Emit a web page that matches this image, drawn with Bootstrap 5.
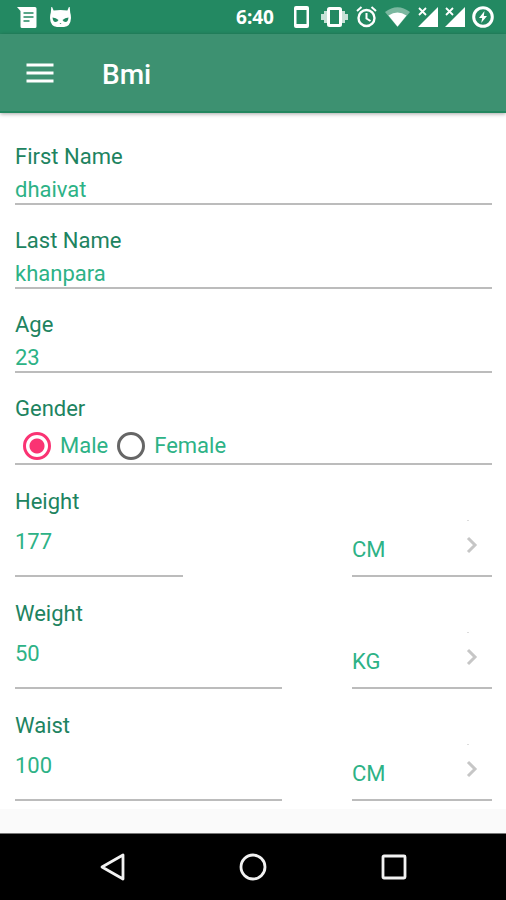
<!DOCTYPE html>
<html lang="en">
<head>
<meta charset="utf-8">
<meta name="viewport" content="width=device-width, initial-scale=1">
<title>Bmi</title>
<link href="https://cdn.jsdelivr.net/npm/bootstrap@5.3.0/dist/css/bootstrap.min.css" rel="stylesheet">
<style>
  body { font-family: Roboto, "Liberation Sans", sans-serif; font-size: 22px; line-height: 32px; color: #208360; background: #fafafa; }
  svg { display: block; flex: none; }
  .status-bar { height: 34px; padding: 0 12px 0 17px; gap: 13px; background: #238962; color: #fff; }
  .status-icons { gap: 8px; }
  .signals { gap: 7px; }
  .clock { font-family: "Noto Sans", Roboto, sans-serif; font-size: 19px; font-weight: 700; margin-right: 12px; }
  .app-bar { height: 79px; padding: 0 26px; gap: 48px; background: #3d9171; border-bottom: 2px solid #23875f; box-shadow: 0 1px 4px rgba(0,0,0,.35); color: #fff; position: relative; }
  .app-title { font-size: 28px; font-weight: 500; line-height: 34px; padding-top: 4px; }
  .bmi-form { padding: 27px 14px 8px 15px; }
  .field { margin-bottom: 19px; }
  .field-last { margin-bottom: 20px; }
  .field-label { display: block; height: 32px; line-height: 34px; }
  .line-box { border: 0; border-bottom: 2px solid #bcbcbc; border-radius: 0; background: transparent; color: #2db286; padding: 0; outline: 0; }
  .text-line { display: block; width: 100%; height: 33px; padding-top: 4px; }
  .radio-line { height: 41px; padding: 4px 0 0 8px; gap: 9px; }
  .ring { appearance: none; width: 28px; height: 28px; margin: 0; border: 3px solid #666; border-radius: 50%; background: #fff; }
  .ring:checked { border-color: #fa3373; background: radial-gradient(circle, #fa3373 7px, #fff 8px); }
  .measure { margin-bottom: 20px; }
  .measure:last-child { margin-bottom: 0; }
  .measure-grid { display: grid; grid-template-columns: 267fr 70fr 140fr; }
  .amount { width: 100%; height: 60px; padding-bottom: 10px; }
  .amount-short { width: 63%; }
  .unit-line { grid-column: 3; height: 60px; padding-right: 14px; }
  .unit-select { appearance: none; border: 0; background: transparent; color: inherit; padding: 8px 0 0; min-width: 0; outline: 0; }
  .nav-keys { height: 67px; background: #000; border-top: 1px solid #777; gap: 113px; }
  .key { width: 28px; height: 28px; padding: 0; border: 0; background: none; }
</style>
</head>
<body class="d-flex flex-column min-vh-100">
<header>
  <div class="status-bar d-flex align-items-center">
    <svg width="20" height="21" viewBox="0 0 20 21"><path fill="#fff" d="M0 0h18q1.500 0 1.500 1.500v18q0 1.500-1.500 1.500H5q-1.500 0-1.500-1.500V4z"/><path d="M6.500 6h10M6.500 10h10M6.500 14h6" stroke="#238962" stroke-width="1.500"/></svg>
    <svg width="21" height="20" viewBox="1 0 21 20"><path fill="#fff" d="M2.300 0h.8l1.500 3.500Q11.500 2.600 18.400 3.500L19.900 0h.8l.5 5.500Q22 8 22 11q-.5 8.500-7 9H8Q1.500 19.500 1 11q0-3 .8-5.500z"/><path fill="#238962" d="M3.500 10.500q3.500 0 6 2.500-1 2-3 2-2.500 0-3-4.500zM19.500 10.500q-3.500 0-6 2.500 1 2 3 2 2.500 0 3-4.500zM10.500 16h2l-1 1z"/></svg>
    <div class="status-icons d-flex align-items-center ms-auto">
      <span class="clock">6:40</span>
      <svg class="me-1" width="15" height="22" viewBox="0 0 15 22"><rect width="15" height="22" rx="2" fill="#fff"/><path fill="#238962" d="M2.500 4h10v14h-10z"/></svg>
      <svg width="27" height="20" viewBox="0 0 27 20"><path d="M3 4h5v12H3zM0 7h4v6H0zM19 4h5v12h-5zM23 7h4v6h-4z" fill="#fff" opacity=".75"/><rect x="7.500" y="1.500" width="12" height="17" rx="1" fill="#238962" stroke="#fff" stroke-width="3"/></svg>
      <svg width="21" height="22" viewBox="0 0 21 22"><circle cx="10.500" cy="12" r="8" fill="none" stroke="#fff" stroke-width="2.400"/><path d="M10.500 7v5.500l4 2.500M1 5l4.500-4M20 5l-4.500-4" fill="none" stroke="#fff" stroke-width="2"/></svg>
      <svg width="25" height="20" viewBox="0 0 25 20"><path d="M0 5Q12.500-4.500 25 5L12.500 20z" fill="#fff" opacity=".4"/><path d="M3.500 8.500Q12.500 2.500 21.500 8.500L12.500 19.500z" fill="#fff"/></svg>
      <div class="signals d-flex align-items-center">
        <svg width="20" height="20" viewBox="0 0 20 20"><path fill="#fff" d="M20 0v20H0z"/><path fill="#238962" d="M0 0h10v10H0z"/><path d="M1 1l7 7M8 1L1 8" stroke="#fff" stroke-width="1.800"/></svg>
        <svg width="20" height="20" viewBox="0 0 20 20"><path fill="#fff" d="M20 0v20H0z"/><path fill="#238962" d="M0 0h10v10H0z"/><path d="M1 1l7 7M8 1L1 8" stroke="#fff" stroke-width="1.800"/></svg>
        <svg width="22" height="22" viewBox="0 0 22 22"><circle cx="11" cy="11" r="9.300" fill="none" stroke="#fff" stroke-width="3"/><path fill="#fff" d="M12.500 5l-5.500 7h3.200l-1 5 5.800-7h-3.200z"/></svg>
      </div>
    </div>
  </div>
  <div class="app-bar d-flex align-items-center">
    <button class="key" type="button" aria-label="Menu"><svg width="28" height="28" viewBox="0 0 28 28"><path d="M.5 6h27M.5 14h27M.5 22h27" stroke="#fff" stroke-width="3"/></svg></button>
    <h1 class="app-title m-0">Bmi</h1>
  </div>
</header>
<main>
  <form class="bmi-form bg-white">
    <div class="field"><label class="field-label" for="first">First Name</label><input class="line-box text-line" id="first" type="text" value="dhaivat"></div>
    <div class="field"><label class="field-label" for="last">Last Name</label><input class="line-box text-line" id="last" type="text" value="khanpara"></div>
    <div class="field"><label class="field-label" for="age">Age</label><input class="line-box text-line" id="age" type="text" inputmode="numeric" value="23"></div>
    <div class="field-last" role="radiogroup" aria-labelledby="gender"><span class="field-label" id="gender">Gender</span>
      <div class="line-box radio-line d-flex align-items-center">
        <input class="ring" type="radio" name="gender" id="male" checked><label for="male">Male</label>
        <input class="ring" type="radio" name="gender" id="female"><label for="female">Female</label>
      </div>
    </div>
    <div class="measure"><label class="field-label" for="height">Height</label>
      <div class="measure-grid"><div><input class="line-box amount amount-short" id="height" type="text" value="177"></div>
        <div class="line-box unit-line d-flex align-items-center"><select class="unit-select flex-grow-1" aria-label="Height unit"><option>CM</option><option>Inch</option></select><svg width="12" height="58" viewBox="0 0 12 58"><path d="M1 3.500h2" stroke="#ddd"/><path d="M2 21l7 7-7 7" fill="none" stroke="#c6c6c6" stroke-width="3"/></svg></div></div>
    </div>
    <div class="measure"><label class="field-label" for="weight">Weight</label>
      <div class="measure-grid"><div><input class="line-box amount" id="weight" type="text" value="50"></div>
        <div class="line-box unit-line d-flex align-items-center"><select class="unit-select flex-grow-1" aria-label="Weight unit"><option>KG</option><option>Pound</option></select><svg width="12" height="58" viewBox="0 0 12 58"><path d="M1 3.500h2" stroke="#ddd"/><path d="M2 21l7 7-7 7" fill="none" stroke="#c6c6c6" stroke-width="3"/></svg></div></div>
    </div>
    <div class="measure"><label class="field-label" for="waist">Waist</label>
      <div class="measure-grid"><div><input class="line-box amount" id="waist" type="text" value="100"></div>
        <div class="line-box unit-line d-flex align-items-center"><select class="unit-select flex-grow-1" aria-label="Waist unit"><option>CM</option><option>Inch</option></select><svg width="12" height="58" viewBox="0 0 12 58"><path d="M1 3.500h2" stroke="#ddd"/><path d="M2 21l7 7-7 7" fill="none" stroke="#c6c6c6" stroke-width="3"/></svg></div></div>
    </div>
  </form>
</main>
<nav class="nav-keys d-flex align-items-center justify-content-center mt-auto" aria-label="System">
  <button class="key" type="button" aria-label="Back"><svg width="28" height="28" viewBox="0 0 28 28"><path d="M25 2v24L4 14z" fill="none" stroke="#f2f2f2" stroke-width="2.800" stroke-linejoin="round"/></svg></button>
  <button class="key" type="button" aria-label="Home"><svg width="28" height="28" viewBox="0 0 28 28"><circle cx="14" cy="14" r="12" fill="none" stroke="#f2f2f2" stroke-width="2.800"/></svg></button>
  <button class="key" type="button" aria-label="Recent apps"><svg width="28" height="28" viewBox="0 0 28 28"><rect x="3" y="3" width="22" height="22" rx="1" fill="none" stroke="#f2f2f2" stroke-width="2.800"/></svg></button>
</nav>
<script src="https://cdn.jsdelivr.net/npm/bootstrap@5.3.0/dist/js/bootstrap.bundle.min.js"></script>
</body>
</html>
